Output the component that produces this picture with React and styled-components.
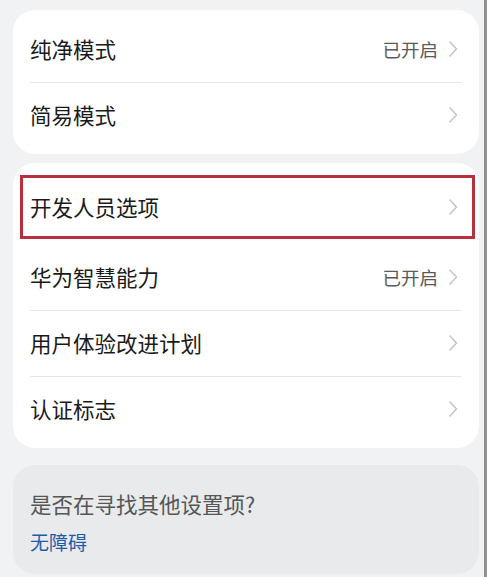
import React from 'react';
import styled, { createGlobalStyle } from 'styled-components';

const GlobalStyle = createGlobalStyle`
	html, body {
		margin: 0;
		padding: 0;
		background: #f1f2f4;
	}
	* { box-sizing: border-box; }
`;

const Page = styled.div`
	width: 487px;
	height: 577px;
	overflow: hidden;
	background: #f1f2f4;
	padding: 10px 5px 0 13px;
	border-right: 3px solid #8f9092;
	font-family: "Noto Sans CJK SC", "Noto Sans", sans-serif;
	display: flex;
	flex-direction: column;
`;

const Card = styled.div`
	background: ${({ $muted }) => ($muted ? '#e9eaec' : '#ffffff')};
	border-radius: 22px;
	padding: ${({ $muted }) => ($muted ? '0' : '6px 0')};
	margin-top: ${({ $gap }) => $gap || 0}px;
	display: flex;
	flex-direction: column;
`;

const Row = styled.div`
	position: relative;
	height: ${({ $tall }) => ($tall ? 75 : 66)}px;
	display: flex;
	align-items: center;
	padding: 0 21px 0 17px;

	${({ $divider }) => $divider && `
		&::before{
			content: '';
			position: absolute;
			top: 0;
			left: 17px;
			right: 17px;
			height: 1px;
			background: #e6e7e9;
		}
	`}
`;

const Highlight = styled.div`
	position: absolute;
	left: 7px;
	right: 4px;
	top: 6px;
	bottom: 5px;
	border: 3px solid #b8303d;
	pointer-events: none;
`;

const Label = styled.div`
	flex: 1;
	font-size: 21.5px;
	color: #1a1a1a;
	line-height: 1;
`;

const Value = styled.div`
	font-size: 18.5px;
	color: #5a5a5a;
	margin-right: 11px;
	line-height: 1;
`;

const Chevron = () => (
	<svg width="9" height="16" viewBox="0 0 9 16">
		<polyline points="1,1 7.5,8 1,15" fill="none" stroke="#c5c6c8" strokeWidth="1.6" strokeLinecap="round" strokeLinejoin="round" />
	</svg>
);

const Hint = styled.div`
	padding: 27px 17px 0;
	height: 109px;
	display: flex;
	flex-direction: column;
	gap: 14px;
`;

const HintTitle = styled.div`
	font-size: 21.5px;
	color: #555657;
	line-height: 24px;
`;

const HintLink = styled.div`
	font-size: 19px;
	color: #1f5ca8;
	line-height: 24px;
`;

const Item = ({ label, value, divider, tall, highlighted }) => (
	<Row $divider={divider} $tall={tall}>
		<Label>{label}</Label>
		{value && <Value>{value}</Value>}
		<Chevron />
		{highlighted && <Highlight />}
	</Row>
);

export default function App() {
	return (
		<Page>
			<GlobalStyle />
			<Card>
				<Item label="纯净模式" value="已开启" />
				<Item label="简易模式" divider />
			</Card>

			<Card $gap={9}>
				<Item label="开发人员选项" tall highlighted />
				<Item label="华为智慧能力" value="已开启" />
				<Item label="用户体验改进计划" divider />
				<Item label="认证标志" divider />
			</Card>

			<Card $muted $gap={17}>
				<Hint>
					<HintTitle>是否在寻找其他设置项?</HintTitle>
					<HintLink>无障碍</HintLink>
				</Hint>
			</Card>
		</Page>
	);
}
